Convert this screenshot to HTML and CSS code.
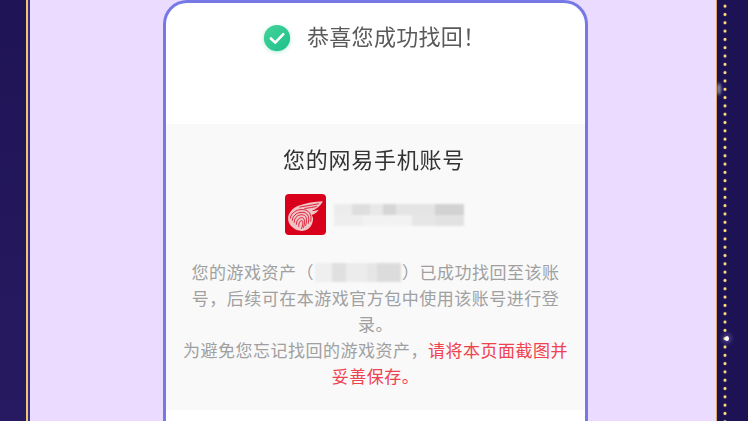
FILE: index.html
```html
<!DOCTYPE html>
<html lang="zh-CN">
<head>
  <meta charset="UTF-8">
  <meta name="viewport" content="width=device-width, initial-scale=1.0">
  <title>找回成功</title>
  <link rel="stylesheet" href="styles.css">
</head>
<body>

<div class="page">
  <div class="side side-left"></div>

  <div class="main">
    <div class="card">
      <div class="result">
        <svg class="check" viewBox="0 0 32 32" aria-hidden="true">
          <defs>
            <linearGradient id="checkFill" x1="0" y1="0" x2="1" y2="1">
              <stop offset="0" stop-color="#43d49a"/>
              <stop offset="1" stop-color="#1fbf8a"/>
            </linearGradient>
          </defs>
          <circle cx="16" cy="16" r="14" fill="url(#checkFill)"/>
          <path d="M9.500 16.500l4.600 4.400 8.600-9" fill="none" stroke="#fff" stroke-width="2.800" stroke-linecap="round" stroke-linejoin="round"/>
        </svg>
        <span class="result-text">恭喜您成功找回！</span>
      </div>

      <div class="panel">
        <h2 class="panel-title">您的网易手机账号</h2>

        <div class="account">
          <svg class="logo" viewBox="0 0 40 40" aria-hidden="true">
            <rect width="40" height="40" rx="4" fill="#d8001a"/>
            <path d="M37 7C29 7.500 20 8.500 13 11.500C7 14 3 19 3 24C3 31 10 36 16 36C22 36 26 32 27 27C28 24 27 22 26 20.500C30 19.500 32 16.500 33 15C30 16 28 16.500 26 16.500C31 14.500 35 11 37 7Z" fill="#f0c4c6"/>
            <g fill="none" stroke="#d8001a" stroke-width="0.800">
              <path d="M5 24C6 17.500 13 14 19.500 15.500C25 17 26 22 25 27"/>
              <path d="M7 26C7.500 20 13.500 17 18.500 18C23 19 24 24 22.500 29"/>
              <path d="M9 28C9 22 14 19.500 18 20.500C21.500 21.500 21.500 26 20 31"/>
              <path d="M11 30C11 25 14.500 22.500 17 23.200C19.500 24 19.500 28 18 33"/>
              <path d="M13.500 32C13 28 15 25.500 16.500 26C18 26.500 17.500 30 16 34"/>
              <path d="M14 12.800C20 11.500 27 11 33 9.500"/>
              <path d="M19 14.200C24 13.500 28 13 31 12"/>
            </g>
          </svg>
          <div class="mosaic mosaic-phone"></div>
        </div>

        <div class="desc">
          <div class="line">您的游戏资产（<span class="mosaic mosaic-id"></span>）已成功找回至该账</div>
          <div class="line">号，后续可在本游戏官方包中使用该账号进行登</div>
          <div class="line">录。</div>
          <div class="line">为避免您忘记找回的游戏资产，<span class="warn">请将本页面截图并</span></div>
          <div class="line"><span class="warn">妥善保存。</span></div>
        </div>
      </div>
    </div>
  </div>

  <div class="side side-right">
    <div class="dots"></div>
    <div class="glint"></div>
    <div class="smudge"></div>
  </div>
</div>

</body>
</html>
```

FILE: styles.css
```css
html, body {
  margin: 0;
  height: 100%;
  overflow: hidden;
}

body {
  font-family: "Noto Sans CJK SC", "Noto Sans", sans-serif;
}

.page {
  display: flex;
  width: 748px;
  height: 421px;
  overflow: hidden;
  background: #ebdcff;
}

.side {
  flex: none;
  background: linear-gradient(to bottom, #1f1455, #281a62);
}

.side-left {
  width: 26px;
  border-right: 2px solid #f0c870;
  box-shadow: 2px 0 0 #3a2c80;
}

.side-right {
  position: relative;
  width: 31px;
  border-left: 1px solid #dfa860;
  background: #1c1254;
}

/* rangee de points dores sur le bord droit */
.dots {
  width: 4px;
  height: 100%;
  margin-left: 6px;
  background: radial-gradient(circle 2px at 50% 50%, #ffe78e 0, #ffe078 50%, transparent 100%) 0 2px / 4px 8.320px repeat-y;
}

.glint {
  position: absolute;
  top: 336px;
  left: 8px;
  width: 4px;
  height: 5px;
  border-radius: 50%;
  background: #fff;
  box-shadow: 0 0 5px 2px rgba(200, 170, 255, 0.4);
}

.smudge {
  position: absolute;
  top: 83px;
  left: 0;
  width: 4px;
  height: 12px;
  border-radius: 50%;
  background: rgba(200, 200, 210, 0.7);
  filter: blur(1.500px);
}

.main {
  flex: 1;
  padding-left: 135px;
  min-width: 0;
}

.card {
  width: 419px;
  height: 418px;
  border: 3px solid #7678e6;
  border-bottom: none;
  border-radius: 24px 24px 0 0;
  background: #fff;
  overflow: hidden;
}

.result {
  display: flex;
  align-items: center;
  gap: 15px;
  height: 69px;
  margin-bottom: 52px;
  padding-left: 96px;
}

.check {
  width: 30px;
  height: 30px;
  filter: drop-shadow(0 1px 2px rgba(60, 210, 160, 0.4));
}

.result-text {
  padding-bottom: 5px;
  color: #5a5a5a;
  font-size: 22px;
  letter-spacing: 0.300px;
  white-space: nowrap;
  filter: blur(0.300px);
}

.panel {
  height: 286px;
  padding-top: 18px;
  box-sizing: border-box;
  background: #f9f9f9;
}

.panel-title {
  margin: 0;
  padding-right: 3px;
  color: #333;
  font-size: 22px;
  font-weight: 400;
  line-height: 32px;
  letter-spacing: 0.750px;
  text-align: center;
  filter: blur(0.300px);
}

.account {
  display: flex;
  align-items: center;
  gap: 8px;
  margin-top: 20px;
  padding-left: 119px;
}

.logo {
  width: 41px;
  height: 41px;
  filter: blur(0.400px);
}

.mosaic {
  filter: blur(1px);
}

.mosaic-phone {
  width: 130px;
  height: 22px;
  background:
    linear-gradient(to right, #ececec 0 14%, #dedede 14% 28%, #e8e8e8 28% 38%, #d6d6d6 38% 48%, #e4e4e4 48% 78%, #d2d2d2 78% 100%) 0 0 / 100% 50% no-repeat,
    linear-gradient(to right, #eeeeee 0 22%, #f2f2f2 22% 60%, #e6e6e6 60% 78%, #e2e2e2 78% 100%) 0 100% / 100% 50% no-repeat;
}

.mosaic-id {
  display: inline-block;
  width: 86px;
  height: 19px;
  margin: 0 1px;
  vertical-align: -3px;
  background: linear-gradient(to right, #efefef 0 20%, #e0e0e0 20% 36%, #ececec 36% 60%, #e6e6e6 60% 72%, #dcdcdc 72% 100%);
}

.desc {
  margin-top: 24px;
  color: #a0a0a0;
  font-size: 17px;
  line-height: 26px;
  letter-spacing: 0.500px;
  text-align: center;
}

.warn {
  color: #f0414f;
}
```
